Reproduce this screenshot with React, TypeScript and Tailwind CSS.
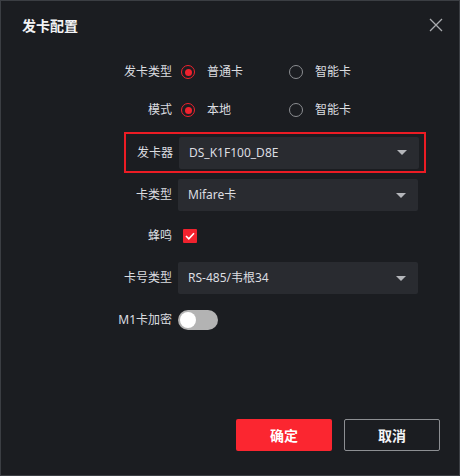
const font = { fontFamily: '"Noto Sans", "Noto Sans CJK SC", sans-serif' };

function Radio({ checked }: { checked?: boolean }) {
  return checked ? (
    <span className="flex h-[14px] w-[14px] items-center justify-center rounded-full border-[1.5px] border-[#f0222e]">
      <span className="h-[7px] w-[7px] rounded-full bg-[#f0222e]" />
    </span>
  ) : (
    <span className="h-[14px] w-[14px] rounded-full border-[1.5px] border-[#8c8e92]" />
  );
}

function RadioGroup({ options, value }: { options: string[]; value: number }) {
  return (
    <div className="flex items-center pl-[3px]">
      {options.map((o, i) => (
        <label key={o} className="flex w-[108px] items-center gap-[12px]">
          <Radio checked={i === value} />
          <span>{o}</span>
        </label>
      ))}
    </div>
  );
}

function Arrow() {
  return (
    <svg width="10" height="5" viewBox="0 0 10 5" className="mr-[12px]">
      <path d="M0 0h10L5 5z" fill="#b4b6ba" />
    </svg>
  );
}

function Select({ value }: { value: string }) {
  return (
    <div className="flex h-[32px] w-[240px] items-center justify-between rounded-[2px] bg-[#292b30] pl-[10px]">
      <span>{value}</span>
      <Arrow />
    </div>
  );
}

function Row({ label, children, h = 32, mt = 0 }: { label: string; children: React.ReactNode; h?: number; mt?: number }) {
  return (
    <div className="flex items-center" style={{ height: h, marginTop: mt }}>
      <div className="flex w-[72px] justify-end whitespace-nowrap">{label}</div>
      <div className="ml-[6px] flex items-center">{children}</div>
    </div>
  );
}

export default function App() {
  return (
    <div
      className="relative flex h-[476px] w-[460px] flex-col border border-[#3b3e43] bg-[#1b1d21] text-[12px] text-[#dcdde0]"
      style={font}
    >
      {/* Header */}
      <div className="flex h-[48px] items-center justify-between pl-[21px] pr-[16px]">
        <span className="text-[14px] font-bold text-[#f2f3f5]">发卡配置</span>
        <svg width="14" height="14" viewBox="0 0 14 14">
          <path d="M1 1l12 12M13 1L1 13" stroke="#a9abae" strokeWidth="1.3" />
        </svg>
      </div>

      {/* Form */}
      <div className="ml-[99px] mt-[7px] flex flex-col">
        <Row label="发卡类型">
          <RadioGroup options={["普通卡", "智能卡"]} value={0} />
        </Row>
        <Row label="模式" mt={6}>
          <RadioGroup options={["本地", "智能卡"]} value={0} />
        </Row>

        <div className="ml-[24px] mt-[6px] flex h-[41px] w-[302px] items-center border-2 border-[#ec1c24]">
          <div className="flex w-[47px] justify-end">发卡器</div>
          <div className="ml-[6px]">
            <Select value="DS_K1F100_D8E" />
          </div>
        </div>

        <Row label="卡类型" mt={6}>
          <Select value="Mifare卡" />
        </Row>
        <Row label="蜂鸣" mt={9}>
          <span className="ml-[5px] flex h-[14px] w-[14px] items-center justify-center rounded-[1px] bg-[#f0222e]">
            <svg width="10" height="8" viewBox="0 0 10 8">
              <path d="M1 4l2.8 2.8L9 1.2" stroke="#fff" strokeWidth="1.6" fill="none" />
            </svg>
          </span>
        </Row>
        <Row label="卡号类型" mt={10}>
          <Select value="RS-485/韦根34" />
        </Row>
        <Row label="M1卡加密" mt={10}>
          <span className="flex h-[20px] w-[40px] items-center rounded-full bg-[#b3b3b3] pl-[2px]">
            <span className="h-[16px] w-[16px] rounded-full bg-white" />
          </span>
        </Row>
      </div>

      {/* Footer */}
      <div className="mt-auto mb-[24px] flex justify-end gap-[12px] pr-[19px]">
        <button className="h-[32px] w-[96px] rounded-[2px] bg-[#fb2630] text-[14px] font-bold text-white">确定</button>
        <button className="h-[32px] w-[96px] rounded-[2px] border border-[#8d8f93] text-[14px] font-bold text-[#f2f3f5]">
          取消
        </button>
      </div>
    </div>
  );
}
